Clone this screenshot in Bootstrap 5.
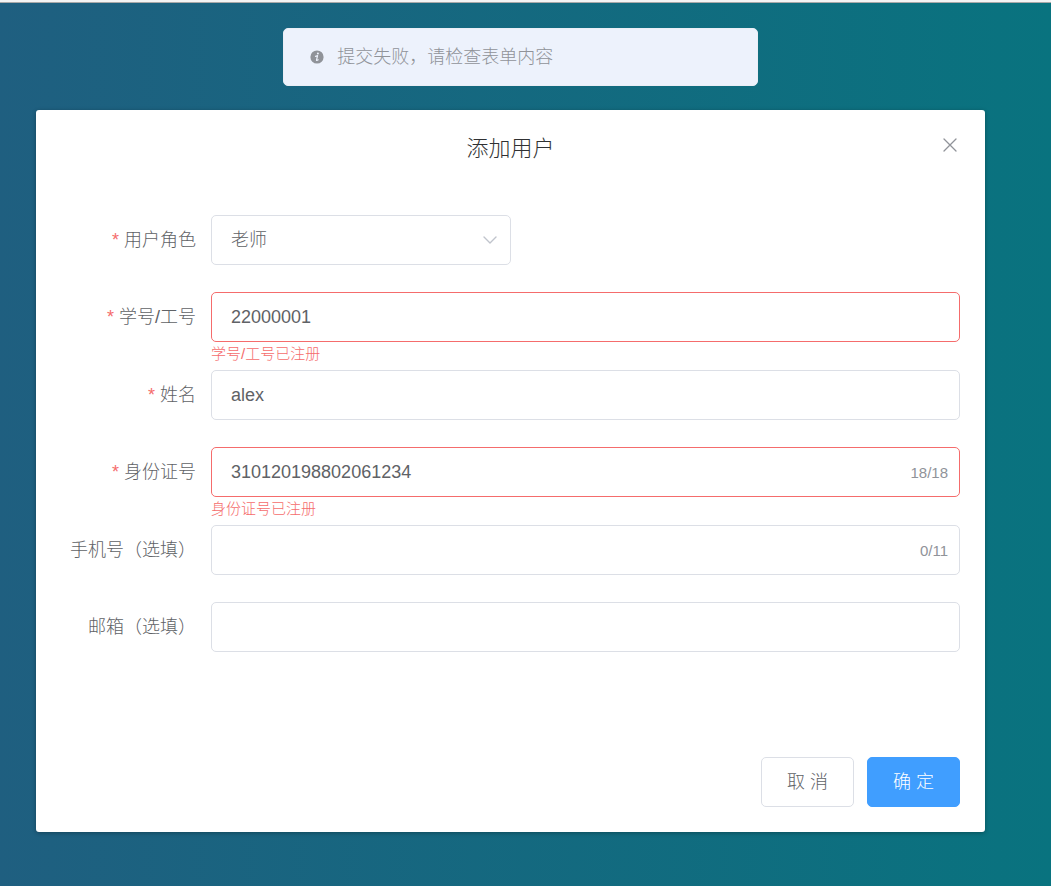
<!DOCTYPE html>
<html lang="zh-CN">
<head>
<meta charset="utf-8">
<meta name="viewport" content="width=device-width, initial-scale=1">
<title>添加用户</title>
<link href="https://cdn.jsdelivr.net/npm/bootstrap@5.3.0/dist/css/bootstrap.min.css" rel="stylesheet">
<style>
  body {
    font-family: "Liberation Sans", "Noto Sans CJK SC", sans-serif;
    font-size: 18px;
    font-weight: 300;
    line-height: 24px;
    color: #606266;
    min-height: 100vh;
    background: linear-gradient(90deg, #1f5f80, #09737f);
    border-top: 2px solid #f4f4f4;
  }
  .page { border-top: 1px solid #a9a9a9; padding: 25px 66px 54px 36px; }
  .notice {
    width: 50%;
    min-width: 300px;
    height: 58px;
    margin: 0 auto 24px;
    left: 10px;
    padding: 0 26px;
    background: #edf2fc;
    border: 1px solid #ebeef5;
    border-radius: 5px;
    color: #909399;
  }
  .panel {
    background: #fff;
    border-radius: 3px;
    box-shadow: 0 1px 4px rgba(0, 0, 0, .3);
    padding: 25px;
  }
  .panel h1 { font-size: 22px; font-weight: 300; line-height: 28px; color: #303133; }
  .close-x { top: 0; right: 0; padding: 3px; color: #909399; line-height: 0; }
  .fields { padding-top: 52px; }
  .field { display: grid; grid-template-columns: 135px minmax(0, 1fr); column-gap: 15px; }
  .field > label { line-height: 50px; text-align: right; white-space: nowrap; }
  .required::before { content: "*"; color: #f56c6c; margin-right: 5px; }
  .field .form-control, .field .form-select {
    height: 50px;
    padding: 0 19px;
    font-size: 18px;
    font-weight: 300;
    color: #606266;
    background: #fff;
    border: 1px solid #dcdfe6;
    border-radius: 5px;
  }
  .role { max-width: 300px; }
  .field .form-control.bad { border-color: #f56c6c; }
  .arrow { right: 14px; top: 20px; pointer-events: none; }
  .count { right: 12px; top: 14px; font-size: 15px; color: #909399; }
  .below { min-height: 27px; }
  .error { height: 28px; font-size: 15px; line-height: 24px; color: #f56c6c; }
  .actions { padding-top: 78px; gap: 13px; }
  .actions .btn {
    min-width: 93px;
    height: 50px;
    padding: 0 20px;
    font-size: 18px;
    font-weight: 300;
    border-radius: 5px;
  }
  .cancel, .cancel:hover { color: #606266; background: #fff; border-color: #dcdfe6; }
  .confirm, .confirm:hover { color: #fff; background: #409eff; border-color: #409eff; }
</style>
</head>
<body>
<div class="page">
  <div class="notice position-relative d-flex align-items-center" role="alert">
    <svg class="me-2 flex-shrink-0" width="19" height="14" viewBox="0 0 19 14" aria-hidden="true">
      <circle cx="7" cy="7" r="6.6" fill="#909399"/>
      <circle cx="7.9" cy="3.6" r="1" fill="#edf2fc"/>
      <path d="M5.5 6.3 7.6 5.7 6.5 10.2Q6.4 10.9 8.2 9.8" fill="none" stroke="#edf2fc" stroke-width="1.2" stroke-linecap="round" stroke-linejoin="round"/>
    </svg>
    <span>提交失败，请检查表单内容</span>
  </div>

  <main class="panel">
    <header class="position-relative text-center">
      <h1 class="m-0">添加用户</h1>
      <button type="button" class="close-x btn border-0 position-absolute" aria-label="关闭">
        <svg width="14" height="14" viewBox="0 0 14 14" fill="none" stroke="currentColor" stroke-width="1.3" stroke-linecap="round"><path d="M1 1 13 13M13 1 1 13"/></svg>
      </button>
    </header>

    <form class="fields">
      <div class="field">
        <label class="required" for="role">用户角色</label>
        <div>
          <div class="role position-relative">
            <select id="role" class="form-select"><option>老师</option></select>
            <svg class="arrow position-absolute" width="14" height="10" viewBox="0 0 14 10" fill="none" stroke="#c0c4cc" stroke-width="1.4" stroke-linecap="round" stroke-linejoin="round" aria-hidden="true"><path d="M1 2 7 8 13 2"/></svg>
          </div>
          <div class="below"></div>
        </div>
      </div>
      <div class="field">
        <label class="required" for="number">学号/工号</label>
        <div>
          <input id="number" class="form-control bad" type="text" value="22000001" aria-describedby="number-error">
          <div id="number-error" class="error">学号/工号已注册</div>
        </div>
      </div>
      <div class="field">
        <label class="required" for="name">姓名</label>
        <div>
          <input id="name" class="form-control" type="text" value="alex">
          <div class="below"></div>
        </div>
      </div>
      <div class="field">
        <label class="required" for="idcard">身份证号</label>
        <div>
          <div class="position-relative">
            <input id="idcard" class="form-control bad" type="text" maxlength="18" value="310120198802061234" aria-describedby="idcard-error">
            <span class="count position-absolute">18/18</span>
          </div>
          <div id="idcard-error" class="error">身份证号已注册</div>
        </div>
      </div>
      <div class="field">
        <label for="phone">手机号（选填）</label>
        <div>
          <div class="position-relative">
            <input id="phone" class="form-control" type="tel" maxlength="11">
            <span class="count position-absolute">0/11</span>
          </div>
          <div class="below"></div>
        </div>
      </div>
      <div class="field">
        <label for="email">邮箱（选填）</label>
        <div>
          <input id="email" class="form-control" type="email">
          <div class="below"></div>
        </div>
      </div>
      <div class="actions d-flex justify-content-end">
        <button type="button" class="btn cancel">取 消</button>
        <button type="submit" class="btn confirm">确 定</button>
      </div>
    </form>
  </main>
</div>
<script src="https://cdn.jsdelivr.net/npm/bootstrap@5.3.0/dist/js/bootstrap.bundle.min.js"></script>
</body>
</html>
